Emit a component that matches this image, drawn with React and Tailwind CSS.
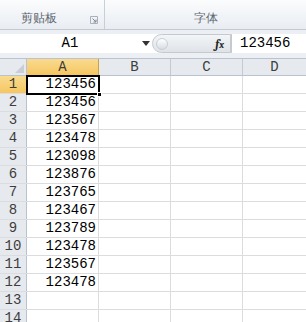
import React from "react";

const values = [
  "123456", "123456", "123567", "123478", "123098", "123876",
  "123765", "123467", "123789", "123478", "123567", "123478",
];

const rows = Array.from({ length: 14 }, (_, i) => ({
  num: i + 1,
  value: values[i] || "",
}));

const Corner = () => (
  <div className="w-[27px] shrink-0 h-full border-r border-[#b9c3cf] bg-[#e6eaef] flex items-end justify-end pr-[2px] pb-[2px]">
    <svg width="9" height="9" viewBox="0 0 9 9">
      <polygon points="9,0 9,9 0,9" fill="#c9ced6" />
    </svg>
  </div>
);

const App = () => {
  return (
    <div className="w-[306px] h-[322px] overflow-hidden bg-white font-mono text-[14px] text-black">
      {/* Ribbon */}
      <div className="h-[30px] flex bg-gradient-to-b from-[#fbfcfd] to-[#e9edf2] border-b border-[#c3c9d1] font-sans text-[12px] text-[#5d6670]">
        <div className="w-[105px] shrink-0 border-r border-[#c9cfd7] flex items-end pb-[2px]">
          <span className="ml-[21px]">剪贴板</span>
          <span className="ml-auto mr-[6px] mb-[3px]">
            <svg width="8" height="8" viewBox="0 0 8 8">
              <path d="M0.5 0.5 H7.5 V7.5 H0.5 Z" fill="none" stroke="#a9b0ba" />
              <path d="M2.5 2.5 L6 6 M6 3.5 V6 H3.5" fill="none" stroke="#7d8590" />
            </svg>
          </span>
        </div>
        <div className="flex-1 flex items-end justify-center pb-[2px]">
          <span>字体</span>
        </div>
      </div>

      {/* Formula bar */}
      <div className="bg-[#eceff3] pt-[4px] pb-[5px]">
        <div className="h-[19px] flex bg-white">
          <div className="w-[152px] shrink-0 flex items-center">
            <span className="w-[140px] text-center">A1</span>
            <svg width="8" height="5" viewBox="0 0 8 5" className="ml-[2px]">
              <polygon points="0,0 8,0 4,5" fill="#333" />
            </svg>
          </div>
          <div className="w-[79px] shrink-0 flex items-center rounded-l-full bg-gradient-to-b from-[#f3f5f7] to-[#dfe3e8] border border-[#c5cad1]">
            <div className="w-[12px] h-[12px] ml-[3px] rounded-full bg-gradient-to-b from-[#ffffff] to-[#d8dde3] border border-[#c9ced5]" />
            <span className="ml-auto mr-[6px] font-serif italic font-bold text-[12px] text-[#222]">
              f<span className="text-[10px]">x</span>
            </span>
          </div>
          <div className="flex-1 flex items-center border-l border-[#c5cad1] pl-[8px]">
            123456
          </div>
        </div>
      </div>

      {/* Grid */}
      <div className="relative">
        {/* Column header */}
        <div className="h-[18px] flex border-y border-[#b9c3cf] bg-[#e6eaef] text-[#3d3d3d]">
          <Corner />
          <div className="w-[72px] shrink-0 flex items-center justify-center bg-gradient-to-b from-[#f9db8f] to-[#f5c65f] border-r border-[#c9a24a]">
            A
          </div>
          <div className="w-[72px] shrink-0 flex items-center justify-center border-r border-[#c3cad3]">
            B
          </div>
          <div className="w-[72px] shrink-0 flex items-center justify-center border-r border-[#c3cad3]">
            C
          </div>
          <div className="flex-1 flex items-center justify-center">D</div>
        </div>

        {rows.map((r) => (
          <div key={r.num} className="h-[18px] flex border-b border-[#dadcdd]">
            <div
              className={
                r.num === 1
                  ? "w-[27px] shrink-0 flex items-center justify-center bg-gradient-to-b from-[#f9db8f] to-[#f5c65f] border-r border-[#c9a24a] text-[#3d3d3d]"
                  : "w-[27px] shrink-0 flex items-center justify-center bg-[#e6eaef] border-r border-[#b9c3cf] text-[#3d3d3d]"
              }
            >
              {r.num}
            </div>
            <div className="w-[72px] shrink-0 flex items-center justify-end pr-[2px] border-r border-[#dadcdd]">
              {r.value}
            </div>
            <div className="w-[72px] shrink-0 border-r border-[#dadcdd]" />
            <div className="w-[72px] shrink-0 border-r border-[#dadcdd]" />
            <div className="flex-1" />
          </div>
        ))}

        {/* Active cell A1 */}
        <div className="absolute left-[26px] top-[17px] w-[74px] h-[20px] border-2 border-black pointer-events-none">
          <div className="absolute -right-[4px] -bottom-[4px] w-[5px] h-[5px] bg-black border border-white" />
        </div>
      </div>
    </div>
  );
};

export default App;
